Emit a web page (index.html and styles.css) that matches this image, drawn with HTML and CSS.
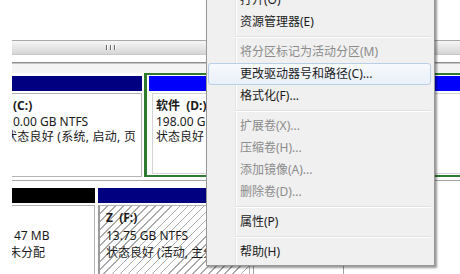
FILE: index.html
```html
<!DOCTYPE html>
<html lang="zh-CN">
<head>
<meta charset="utf-8">
<title>磁盘管理</title>
<link rel="stylesheet" href="styles.css">
</head>
<body>
<div class="view">
  <div class="top"></div>
  <div class="hscroll"><span class="grip"><i></i><i></i><i></i></span></div>
  <div class="gap"></div>
  <div class="rule"></div>
  <div class="pad"></div>
  <div class="disk disk1">
    <div class="part c">
      <div class="bar navy"></div>
      <div class="box">
        <div class="ln b in20">(C:)</div>
        <div class="ln in20">0.00 GB NTFS</div>
        <div class="ln in12 wide">状态良好 (系统, 启动, 页面文件, 故障转储, 主分区)</div>
      </div>
    </div>
    <div class="part d">
      <div class="bar blue"></div>
      <div class="box">
        <div class="ln b">软件  (D:)</div>
        <div class="ln">198.00 GB NTFS</div>
        <div class="ln">状态良好 (逻辑驱动器)</div>
      </div>
    </div>
  </div>
  <div class="disksep"></div>
  <div class="disk disk2">
    <div class="part u">
      <div class="bar black"></div>
      <div class="box">
        <div class="ln"> </div>
        <div class="ln in21">47 MB</div>
        <div class="ln in16">未分配</div>
      </div>
    </div>
    <div class="part f">
      <div class="bar navy"></div>
      <div class="box hatch">
        <div class="ln b">Z  (F:)</div>
        <div class="ln">13.75 GB NTFS</div>
        <div class="ln">状态良好 (活动, 主分区)</div>
      </div>
    </div>
    <div class="part g">
      <div class="bar navy"></div>
      <div class="box"></div>
    </div>
  </div>
</div>

<div class="menu">
  <div class="item">打开(O)</div>
  <div class="item">资源管理器(E)</div>
  <div class="sep"></div>
  <div class="item dis">将分区标记为活动分区(M)</div>
  <div class="item hot">更改驱动器号和路径(C)...</div>
  <div class="item">格式化(F)...</div>
  <div class="sep"></div>
  <div class="item dis">扩展卷(X)...</div>
  <div class="item dis">压缩卷(H)...</div>
  <div class="item dis">添加镜像(A)...</div>
  <div class="item dis">删除卷(D)...</div>
  <div class="sep"></div>
  <div class="item">属性(P)</div>
  <div class="sep"></div>
  <div class="item">帮助(H)</div>
</div>
</body>
</html>
```
FILE: styles.css
```css
html, body {
  margin: 0;
  padding: 0;
  background: #fff;
}
body {
  width: 460px;
  height: 274px;
  overflow: hidden;
  position: relative;
  font-family: "Noto Sans", "Noto Sans CJK SC", sans-serif;
  font-size: 12px;
  color: #1a1a1a;
}
.view {
  margin-left: 12px;
  width: 448px;
  height: 274px;
  overflow: hidden;
}
.top { height: 40px; }
.hscroll {
  height: 15px;
  box-sizing: border-box;
  border-top: 1px solid #a9a9a9;
  border-bottom: 1px solid #c8c8c8;
  background: linear-gradient(#f6f6f6, #e6e6e6 50%, #d6d6d6);
  position: relative;
}
.grip {
  position: absolute;
  left: 94px;
  top: 4px;
  display: flex;
  gap: 2px;
}
.grip i {
  display: block;
  width: 1px;
  height: 5px;
  background: #6a6a6a;
  border-right: 1px solid #fafafa;
}
.gap { height: 7px; background: #fff; }
.rule { height: 1px; background: #8e8e8e; border-bottom: 1px solid #c4c4c4; }
.pad { height: 9px; background: #f4f4f4; }

.disk { display: flex; }
.disk1 { height: 104px; }
.part { display: flex; flex-direction: column; flex: none; }
.bar { height: 15px; flex: none; }
.navy { background: #000080; }
.blue { background: #0000fb; }
.black { background: #000; }
.box {
  flex: 1;
  margin-top: 2px;
  box-sizing: border-box;
  border: 1px solid #b4b4b4;
  background: #fff;
  overflow: hidden;
}
.ln { line-height: 15.5px; white-space: pre; overflow: hidden; }
.b { font-weight: bold; }
.c { margin-left: -20px; width: 150px; padding-top: 3px; }
.c .box { padding: 4px 6px 0 0; }
.wide { letter-spacing: 0.25px; }
.in20 { padding-left: 20px; }
.in12 { padding-left: 12px; }
.in21 { padding-left: 21px; }
.in16 { padding-left: 16px; }
.d {
  margin-left: 2px;
  width: 400px;
  box-sizing: border-box;
  border: 2px solid #2e7a2e;
  border-left-width: 3px;
  border-right: none;
  padding: 1px 0 0 2px;
}
.d .box {
  margin-left: 3px;
  margin-bottom: 1px;
  border-color: #d4d4d4;
  padding: 4px 0 0 3px;
}
.disksep {
  height: 1px;
  margin-top: 3px;
  background: #a6a6a6;
  border-bottom: 4px solid #fff;
}
.disk2 { height: 89px; padding-top: 3px; }
.disk2 .ln { line-height: 17.5px; }
.disk2 .box { padding-top: 3px; }
.u { margin-left: -20px; width: 103px; }
.f { margin-left: 3px; width: 152px; }
.f .box {
  border-left: 2px solid #9a9a9a;
  padding-left: 6px;
  background: repeating-linear-gradient(135deg, #ffffff 0 4.6px, #a9a9a9 4.6px 5.7px);
}
.g { margin-left: 3px; width: 91px; }
.g .box { border-color: #a0a0a0; }

.menu {
  position: absolute;
  left: 206px;
  top: -14px;
  width: 229px;
  box-sizing: border-box;
  background: #f0f0f0;
  border: 1px solid #979797;
  padding: 2px 3px 2px 1px;
  box-shadow: 2px 2px 2px rgba(0, 0, 0, 0.4);
  font-family: "Noto Sans", "Noto Sans CJK SC", sans-serif;
  font-size: 12px;
}
.menu::before {
  content: "";
  position: absolute;
  left: 28px;
  top: 0;
  bottom: 0;
  width: 1px;
  background: #e2e3e3;
  border-right: 1px solid #ffffff;
}
.item {
  position: relative;
  height: 22px;
  line-height: 20px;
  box-sizing: border-box;
  border: 1px solid transparent;
  border-radius: 3px;
  padding-left: 31px;
  color: #1b1b1b;
  white-space: nowrap;
}
.item.dis { color: #8b8b8b; }
.item.hot {
  border-color: #b9cfe9;
  background: linear-gradient(#f7fafd, #e9f0f9);
}
.sep {
  position: relative;
  height: 0;
  margin: 3px 0 3px 27px;
  border-top: 1px solid #e0e0e0;
  border-bottom: 1px solid #ffffff;
}
```
